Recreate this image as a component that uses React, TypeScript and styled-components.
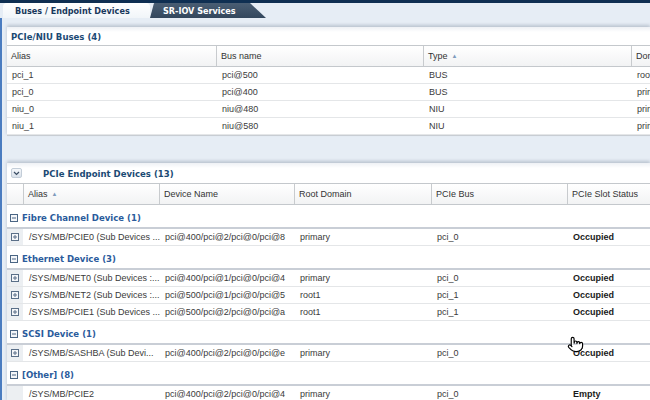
import React from "react";
import styled, { createGlobalStyle } from "styled-components";
import { Pointer } from "lucide-react";

const GlobalStyle = createGlobalStyle`
  html, body {
    margin: 0;
    padding: 0;
    background: #e6edf5;
    overflow: hidden;
  }
  * {
    box-sizing: border-box;
  }
`;

const boldFont = `"DejaVu Sans Condensed", "DejaVu Sans", sans-serif`;
const textFont = `"Liberation Sans", Arial, sans-serif`;

const Page = styled("div")`
  position: relative;
  width: 650px;
  height: 400px;
  overflow: hidden;
  display: flex;
  flex-direction: column;
  background: #e6edf5;
  font-family: ${textFont};
  font-size: 9px;
  color: #333;
`;

const TabBar = styled("div")`
  display: flex;
  align-items: flex-end;
  height: 18px;
  border-top: 3px solid #0f2f52;
  padding-left: 3px;
`;

const Tab = styled("div")<{ active?: boolean }>`
  height: 15px;
  display: flex;
  align-items: center;
  font-family: ${boldFont};
  font-stretch: condensed;
  font-weight: bold;
  font-size: 9px;
  ${({ active }) =>
    active
      ? `
    width: 147px;
    padding-left: 12px;
    color: #18385c;
    background: linear-gradient(#ffffff, #f1f5f9);
    border-radius: 4px 4px 0 0;
  `
      : `
    width: 116px;
    padding-left: 13px;
    color: #ffffff;
    background: linear-gradient(#4a5e74, #33475d);
    clip-path: polygon(0 100%, 4px 0, calc(100% - 16px) 0, 100% 100%);
    border-radius: 5px 0 0 0;
  `}
`;

const Content = styled("div")`
  flex: 1;
  display: flex;
  flex-direction: column;
  border-left: 2px solid #4a7cc0;
  padding: 9px 0 0 5px;
  gap: 27px;
`;

const Panel = styled("div")`
  background: #ffffff;
  overflow: hidden;
  box-shadow: 0 -2px 3px rgba(80, 95, 115, 0.28);
`;

const BusPanel = styled(Panel)`
  border-bottom: 1px solid #c8cdd3;
`;

const PanelHeader = styled("div")<{ tall?: boolean }>`
  display: flex;
  align-items: center;
  gap: 21px;
  height: ${({ tall }) => (tall ? "20px" : "18px")};
  padding-left: 4px;
  font-family: ${boldFont};
  font-stretch: condensed;
  font-weight: bold;
  font-size: 9.5px;
  color: #1b4a74;
  background: linear-gradient(#eef1f5, #ffffff 5px);
`;

const CollapseButton = styled("span")`
  display: inline-flex;
  align-items: center;
  justify-content: center;
  width: 11px;
  height: 10px;
  border-radius: 2px;
  background: linear-gradient(#f6f8fb, #d9e1ea);
  border: 1px solid #c3cdd8;
`;

const Grid = styled("div")<{ cols: string }>`
  display: grid;
  grid-template-columns: ${({ cols }) => cols};
`;

const HeadRow = styled(Grid)`
  height: 22px;
  border-top: 1px solid #c4c8cc;
  border-bottom: 1px solid #c4c8cc;
  background: linear-gradient(#ffffff, #f2f3f4);
`;

const HeadCell = styled("div")`
  display: flex;
  align-items: center;
  gap: 4px;
  padding-left: 4px;
  border-right: 1px solid #c8cbce;
  white-space: nowrap;
  overflow: hidden;
  color: #333;
`;

const SortArrow = styled("span")`
  font-size: 6px;
  color: #7f9bbd;
`;

const BodyRow = styled(Grid)`
  height: 17px;
  border-bottom: 1px solid #e4e6e8;
`;

const Cell = styled("div")<{ strong?: boolean }>`
  display: flex;
  align-items: center;
  padding-left: 5px;
  white-space: nowrap;
  overflow: hidden;
  color: ${({ strong }) => (strong ? "#1a1a1a" : "#3a3a3a")};
  font-weight: ${({ strong }) => (strong ? "bold" : "normal")};
`;

const IconCell = styled("div")`
  display: flex;
  align-items: center;
  justify-content: center;
  background: #eceff2;
  border-right: 1px solid #ffffff;
`;

const GroupRow = styled("div")`
  height: 24px;
  display: flex;
  align-items: center;
  gap: 4px;
  padding: 3px 0 0 3px;
  border-bottom: 2px solid #c9ced6;
  font-family: ${boldFont};
  font-stretch: condensed;
  font-weight: bold;
  font-size: 9.5px;
  color: #2a5b9c;
`;

const Cursor = styled("div")`
  position: absolute;
  left: 567px;
  top: 336px;
  line-height: 0;
`;

const BoxIcon = ({ plus, color }: { plus?: boolean; color: string }) => (
  <svg width="8" height="8" viewBox="0 0 8 8">
    <rect x="0.5" y="0.5" width="7" height="7" fill="#f4f6f9" stroke={color} strokeWidth="1" />
    <line x1="2" y1="4" x2="6" y2="4" stroke={color} strokeWidth="1" />
    {plus && <line x1="4" y1="2" x2="4" y2="6" stroke={color} strokeWidth="1" />}
  </svg>
);

const busCols = "210px 207px 208px 208px";
const deviceCols = "17px 136px 135px 137px 136px 136px";

const buses = [
  ["pci_1", "pci@500", "BUS", "root1"],
  ["pci_0", "pci@400", "BUS", "primary"],
  ["niu_0", "niu@480", "NIU", "primary"],
  ["niu_1", "niu@580", "NIU", "primary"],
];

type Device = { alias: string; name: string; domain: string; bus: string; status: string; expandable: boolean };

const groups: { title: string; devices: Device[] }[] = [
  {
    title: "Fibre Channel Device (1)",
    devices: [
      { alias: "/SYS/MB/PCIE0 (Sub Devices ...", name: "pci@400/pci@2/pci@0/pci@8", domain: "primary", bus: "pci_0", status: "Occupied", expandable: true },
    ],
  },
  {
    title: "Ethernet Device (3)",
    devices: [
      { alias: "/SYS/MB/NET0 (Sub Devices :...", name: "pci@400/pci@1/pci@0/pci@4", domain: "primary", bus: "pci_0", status: "Occupied", expandable: true },
      { alias: "/SYS/MB/NET2 (Sub Devices :...", name: "pci@500/pci@1/pci@0/pci@5", domain: "root1", bus: "pci_1", status: "Occupied", expandable: true },
      { alias: "/SYS/MB/PCIE1 (Sub Devices ...", name: "pci@500/pci@2/pci@0/pci@a", domain: "root1", bus: "pci_1", status: "Occupied", expandable: true },
    ],
  },
  {
    title: "SCSI Device (1)",
    devices: [
      { alias: "/SYS/MB/SASHBA (Sub Devi...", name: "pci@400/pci@2/pci@0/pci@e", domain: "primary", bus: "pci_0", status: "Occupied", expandable: true },
    ],
  },
  {
    title: "[Other] (8)",
    devices: [
      { alias: "/SYS/MB/PCIE2", name: "pci@400/pci@2/pci@0/pci@4", domain: "primary", bus: "pci_0", status: "Empty", expandable: false },
    ],
  },
];

export default function App() {
  return (
    <Page>
      <GlobalStyle />
      <TabBar>
        <Tab active>Buses / Endpoint Devices</Tab>
        <Tab>SR-IOV Services</Tab>
      </TabBar>
      <Content>
        <BusPanel>
          <PanelHeader>PCIe/NIU Buses (4)</PanelHeader>
          <HeadRow cols={busCols}>
            <HeadCell>Alias</HeadCell>
            <HeadCell>Bus name</HeadCell>
            <HeadCell>
              Type <SortArrow>▲</SortArrow>
            </HeadCell>
            <HeadCell>Domain</HeadCell>
          </HeadRow>
          {buses.map((row) => (
            <BodyRow cols={busCols} key={row[0]}>
              {row.map((v, i) => (
                <Cell key={i}>{v}</Cell>
              ))}
            </BodyRow>
          ))}
        </BusPanel>

        <Panel>
          <PanelHeader tall>
            <CollapseButton>
              <svg width="7" height="5" viewBox="0 0 7 5">
                <polyline points="1,1 3.5,3.5 6,1" fill="none" stroke="#3b4d63" strokeWidth="1.2" />
              </svg>
            </CollapseButton>
            PCIe Endpoint Devices (13)
          </PanelHeader>
          <HeadRow cols={deviceCols}>
            <HeadCell />
            <HeadCell>
              Alias <SortArrow>▲</SortArrow>
            </HeadCell>
            <HeadCell>Device Name</HeadCell>
            <HeadCell>Root Domain</HeadCell>
            <HeadCell>PCIe Bus</HeadCell>
            <HeadCell>PCIe Slot Status</HeadCell>
          </HeadRow>
          {groups.map((g) => (
            <React.Fragment key={g.title}>
              <GroupRow>
                <BoxIcon color="#4a6584" />
                {g.title}
              </GroupRow>
              {g.devices.map((d) => (
                <BodyRow cols={deviceCols} key={d.alias}>
                  <IconCell>{d.expandable && <BoxIcon plus color="#5a6f88" />}</IconCell>
                  <Cell>{d.alias}</Cell>
                  <Cell>{d.name}</Cell>
                  <Cell>{d.domain}</Cell>
                  <Cell>{d.bus}</Cell>
                  <Cell strong>{d.status}</Cell>
                </BodyRow>
              ))}
            </React.Fragment>
          ))}
        </Panel>
      </Content>
      <Cursor>
        <Pointer size={17} fill="#ffffff" color="#000000" strokeWidth={1.6} />
      </Cursor>
    </Page>
  );
}
